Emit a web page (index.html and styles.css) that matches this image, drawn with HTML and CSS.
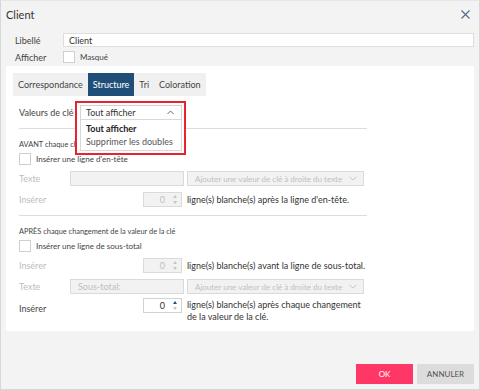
FILE: index.html
```html
<!DOCTYPE html>
<html lang="fr">
<head>
    <meta charset="UTF-8">
    <title>Client</title>
    <link rel="stylesheet" href="styles.css">
</head>
<body>
    <div class="dialog">
        <div class="dialog-header">
            <span class="dialog-title">Client</span>
            <span class="close-btn">
                <svg width="9" height="9" viewBox="0 0 9 9"><path d="M0.5 0.5 L8.5 8.5 M8.5 0.5 L0.5 8.5" stroke="#4d6d8f" stroke-width="1.1" fill="none"/></svg>
            </span>
        </div>

        <div class="top-form">
            <div class="form-row">
                <label class="top-label">Libellé</label>
                <input class="text-input wide" type="text" value="Client">
            </div>
            <div class="form-row">
                <label class="top-label">Afficher</label>
                <span class="checkbox"></span>
                <span class="small-text">Masqué</span>
            </div>
        </div>

        <div class="panel">
            <div class="tabs">
                <span class="tab">Correspondance</span>
                <span class="tab active">Structure</span>
                <span class="tab">Tri</span>
                <span class="tab">Coloration</span>
            </div>

            <div class="tab-body">
                <div class="row key-row">
                    <span class="label">Valeurs de clé</span>
                    <div class="select-wrap">
                        <div class="select open">
                            <span>Tout afficher</span>
                            <svg width="7" height="5" viewBox="0 0 7 5"><path d="M0.5 4 L3.5 1 L6.5 4" stroke="#555" stroke-width="0.9" fill="none"/></svg>
                        </div>
                        <ul class="select-list">
                            <li class="selected">Tout afficher</li>
                            <li>Supprimer les doubles</li>
                        </ul>
                        <div class="highlight"></div>
                    </div>
                </div>

                <hr class="sep">

                <div class="section-title">AVANT chaque changement de la valeur de la clé</div>
                <div class="check-row">
                    <span class="checkbox"></span>
                    <span class="small-text">Insérer une ligne d'en-tête</span>
                </div>
                <div class="row disabled">
                    <span class="label">Texte</span>
                    <span class="field text-field"></span>
                    <span class="field combo">Ajouter une valeur de clé à droite du texte
                        <svg width="8" height="5" viewBox="0 0 8 5"><path d="M0.5 0.8 L4 4 L7.5 0.8" stroke="#c4c4c4" stroke-width="0.9" fill="none"/></svg>
                    </span>
                </div>
                <div class="row disabled">
                    <span class="label">Insérer</span>
                    <span class="spacer"></span>
                    <span class="field number">0
                        <span class="spin"><i class="up"></i><i class="down"></i></span>
                    </span>
                    <span class="after-text">ligne(s) blanche(s) après la ligne d'en-tête.</span>
                </div>

                <hr class="sep">

                <div class="section-title">APRÈS chaque changement de la valeur de la clé</div>
                <div class="check-row">
                    <span class="checkbox"></span>
                    <span class="small-text">Insérer une ligne de sous-total</span>
                </div>
                <div class="row disabled">
                    <span class="label">Insérer</span>
                    <span class="spacer"></span>
                    <span class="field number">0
                        <span class="spin"><i class="up"></i><i class="down"></i></span>
                    </span>
                    <span class="after-text">ligne(s) blanche(s) avant la ligne de sous-total.</span>
                </div>
                <div class="row disabled">
                    <span class="label">Texte</span>
                    <span class="field text-field">Sous-total:</span>
                    <span class="field combo">Ajouter une valeur de clé à droite du texte
                        <svg width="8" height="5" viewBox="0 0 8 5"><path d="M0.5 0.8 L4 4 L7.5 0.8" stroke="#c4c4c4" stroke-width="0.9" fill="none"/></svg>
                    </span>
                </div>
                <div class="row last-row">
                    <span class="label">Insérer</span>
                    <span class="spacer"></span>
                    <span class="field number enabled">0
                        <span class="spin"><i class="up"></i><i class="down"></i></span>
                    </span>
                    <span class="after-text">ligne(s) blanche(s) après chaque changement de la valeur de la clé.</span>
                </div>
            </div>
        </div>

        <div class="dialog-footer">
            <button class="btn btn-ok">OK</button>
            <button class="btn btn-cancel">ANNULER</button>
        </div>
    </div>
</body>
</html>
```

FILE: styles.css
```css
* {
    box-sizing: border-box;
    margin: 0;
    padding: 0;
}

body {
    font-family: Lato, 'Open Sans', sans-serif;
    font-size: 9px;
    color: #333;
    background: #fff;
}

.dialog {
    width: 480px;
    height: 390px;
    background-color: #f3f3f3;
    border: 1px solid #d7d7d7;
    border-top-color: #e6e6e6;
    display: flex;
    flex-direction: column;
}

.dialog-header {
    height: 27px;
    display: flex;
    align-items: center;
    justify-content: space-between;
    padding: 0 9px 0 5px;
}

.dialog-title {
    font-size: 11px;
    color: #333;
}

.close-btn {
    display: flex;
}

.top-form {
    padding: 4px 0 0 14px;
}

.form-row {
    display: flex;
    align-items: center;
    height: 16px;
    margin-bottom: 1px;
}

.top-label {
    width: 48px;
    color: #444;
}

.text-input {
    height: 14px;
    border: 1px solid #dedede;
    background: #fff;
    font-family: inherit;
    font-size: 9px;
    color: #333;
    padding: 0 5px;
    outline: none;
}

.text-input.wide {
    width: 411px;
}

.checkbox {
    display: inline-block;
    width: 12px;
    height: 12px;
    border: 1px solid #cfcfcf;
    background: #fff;
}

.small-text {
    font-size: 8px;
    color: #444;
    margin-left: 5px;
}

.panel {
    margin: 0 5px;
    background: #fff;
    height: 265px;
    padding: 7px 7px 0 7px;
}

.tabs {
    display: inline-flex;
    background: #f0f0f0;
    height: 23px;
}

.tab {
    display: flex;
    align-items: center;
    padding: 0 5px;
    font-size: 9px;
    color: #444;
}

.tab.active {
    background: #1f4f79;
    color: #fff;
}

.tab-body {
    padding: 0 6px;
    width: 360px;
}

.row {
    display: flex;
    align-items: center;
    height: 15px;
    margin-top: 6px;
}

.label {
    width: 51px;
    flex-shrink: 0;
    color: #444;
}

.key-row {
    margin-top: 9px;
}

.key-row .label {
    width: 61px;
}

.select-wrap {
    position: relative;
}

.select {
    position: relative;
    z-index: 3;
    width: 102px;
    height: 15px;
    border: 1px solid #d2d2d2;
    background: #fff;
    display: flex;
    align-items: center;
    justify-content: space-between;
    padding: 0 7px 0 5px;
    color: #333;
}

.select-list {
    position: absolute;
    top: 14px;
    left: 0;
    width: 102px;
    list-style: none;
    background: #fff;
    border: 1px solid #d8d8d8;
    padding: 2px 0;
    z-index: 3;
}

.select-list li {
    padding: 0 5px;
    height: 13px;
    line-height: 13px;
    color: #555;
}

.select-list li.selected {
    font-weight: bold;
    color: #222;
}

.highlight {
    position: absolute;
    top: -4px;
    left: -5px;
    width: 111px;
    height: 54px;
    border: 2px solid #e8232f;
    background: #fff;
    z-index: 2;
}

.sep {
    border: none;
    border-top: 1px solid #dcdcdc;
    margin-top: 8px;
    width: 348px;
}

.section-title {
    font-size: 7.4px;
    color: #444;
    margin-top: 11px;
    white-space: nowrap;
}

.check-row {
    display: flex;
    align-items: center;
    margin-top: 4px;
    height: 12px;
}

.field {
    height: 15px;
    border: 1px solid #dadada;
    background: #f2f2f2;
    display: flex;
    align-items: center;
    color: #c0c0c0;
}

.text-field {
    width: 114px;
    padding-left: 7px;
}

.combo {
    width: 177px;
    margin-left: 3px;
    padding: 0 6px 0 7px;
    justify-content: space-between;
    white-space: nowrap;
    font-size: 8px;
}

.spacer {
    width: 73px;
    flex-shrink: 0;
}

.number {
    width: 39px;
    justify-content: flex-end;
    padding-right: 4px;
    flex-shrink: 0;
}

.spin {
    display: flex;
    flex-direction: column;
    gap: 3px;
    margin-left: 8px;
}

.spin i {
    display: block;
    width: 0;
    height: 0;
    border-left: 2.5px solid transparent;
    border-right: 2.5px solid transparent;
}

.spin .up {
    border-bottom: 3px solid #c6c6c6;
}

.spin .down {
    border-top: 3px solid #c6c6c6;
}

.after-text {
    margin-left: 5px;
    color: #333;
    white-space: nowrap;
}

.disabled .label {
    color: #bdbdbd;
}

.last-row {
    height: 16px;
    margin-top: 4px;
    align-items: flex-start;
}

.last-row .label {
    margin-top: 5px;
}

.number.enabled {
    background: #fff;
    color: #333;
    border-color: #d2d2d2;
}

.number.enabled .spin .up {
    border-bottom-color: #1f4f79;
}

.last-row .after-text {
    width: 190px;
    line-height: 12px;
    margin-top: 1px;
    white-space: normal;
}

.dialog-footer {
    display: flex;
    justify-content: flex-end;
    gap: 4px;
    padding: 33px 5px 0 0;
}

.btn {
    width: 57px;
    height: 20px;
    border: none;
    font-family: inherit;
    font-size: 8px;
}

.btn-ok {
    background: #ff3767;
    color: #fff;
}

.btn-cancel {
    background: #dcdcdc;
    color: #555;
}
```
